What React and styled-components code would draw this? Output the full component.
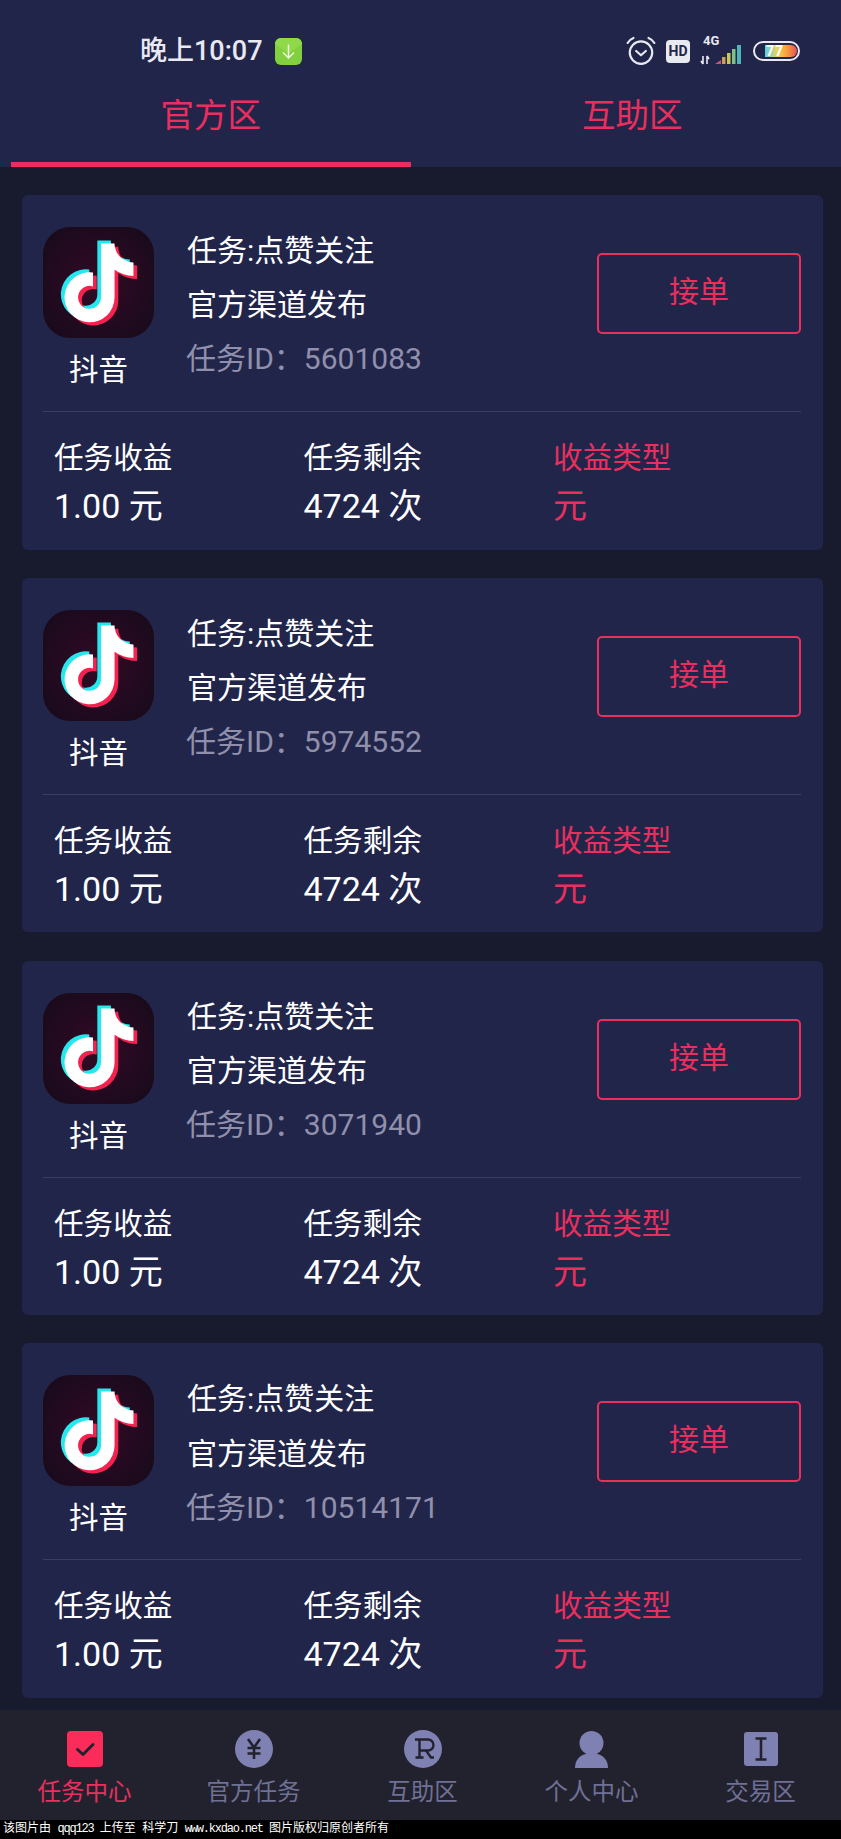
import React from "react";
import styled, { createGlobalStyle } from "styled-components";

const pink = "#e92f5e";
const Global = createGlobalStyle`
  html, body { margin: 0; padding: 0; background: #181a2e; }
  body { font-family: Roboto, "Noto Sans CJK SC", sans-serif; }
  * { box-sizing: border-box; }
`;

const Page = styled.div`
  width: 841px;
  height: 1839px;
  display: flex;
  flex-direction: column;
  overflow: hidden;
  background: #181a2e;
`;
const Header = styled.header`
  height: 167px;
  flex: none;
  background: #22254a;
  display: flex;
  flex-direction: column;
`;
const StatusBar = styled.div`
  height: 90px;
  padding: 33px 41px 0 140px;
  display: flex;
  align-items: flex-start;
  justify-content: space-between;
`;
const TimeGroup = styled.div`
  display: flex;
  align-items: center;
  gap: 12px;
  height: 36px;
`;
const Time = styled.span`
  color: #e9e9f2;
  font-size: 27px;
  font-weight: 500;
  line-height: 36px;
  white-space: nowrap;
`;
const StatusIcons = styled.div`
  display: flex;
  align-items: center;
  gap: 10px;
  height: 36px;
`;
const Tabs = styled.nav`
  flex: 1;
  display: grid;
  grid-template-columns: 1fr 1fr;
`;
const Tab = styled.div`
  position: relative;
  color: ${pink};
  font-size: 33.5px;
  line-height: 52px;
  text-align: center;
  padding-left: ${(p) => (p.$active ? "1px" : "3px")};
  &::after {
    content: "";
    display: ${(p) => (p.$active ? "block" : "none")};
    position: absolute;
    left: 11px;
    right: 10px;
    bottom: 0;
    height: 5px;
    background: ${pink};
  }
`;
const Main = styled.main`
  flex: 1;
  min-height: 0;
  padding: 28px 18px 0 22px;
  display: flex;
  flex-direction: column;
  gap: 28.3px;
`;
const Card = styled.article`
  height: 354.5px;
  flex: none;
  background: #22254a;
  border-radius: 6px;
  padding: 32px 22px 0 21px;
`;
const Top = styled.div`
  height: 185px;
  border-bottom: 1px solid #3b3e60;
  display: flex;
`;
const AppCol = styled.div`
  width: 111px;
  flex: none;
  display: flex;
  flex-direction: column;
  align-items: center;
`;
const AppIcon = styled.div`
  width: 111px;
  height: 111px;
  border-radius: 27px;
  background: radial-gradient(circle at 50% 50%, #330a25 0%, #1e0a1e 70%, #170a1a 100%);
  display: flex;
  align-items: center;
  justify-content: center;
`;
const AppName = styled.div`
  color: #fff;
  font-size: 29.5px;
  line-height: 40px;
  margin-top: 12px;
`;
const Info = styled.div`
  flex: 1;
  margin-left: 33px;
  margin-top: -3px;
  display: flex;
  flex-direction: column;
`;
const InfoLine = styled.div`
  color: ${(p) => (p.$muted ? "#9090ac" : "#fff")};
  font-size: 30px;
  margin-left: ${(p) => (p.$muted ? "-1px" : "0")};
  line-height: 54.2px;
  white-space: nowrap;
`;
const TakeButton = styled.button`
  width: 204px;
  height: 81px;
  margin-top: 26px;
  padding: 0 0 9px;
  flex: none;
  background: transparent;
  border: 2px solid ${pink};
  border-radius: 5px;
  color: ${pink};
  font: inherit;
  font-size: 30px;
`;
const Stats = styled.div`
  display: grid;
  grid-template-columns: 249.5px 249.5px 1fr;
  padding: 22px 0 0 11px;
`;
const Stat = styled.div`
  color: ${(p) => (p.$accent ? pink : "#fff")};
  font-size: ${(p) => (p.$value ? "34px" : "29.6px")};
  line-height: 48px;
  white-space: nowrap;
`;
const BottomNav = styled.nav`
  height: 110px;
  flex: none;
  background: #22222e;
  display: grid;
  grid-template-columns: repeat(5, 169px);
  padding-top: 19px;
`;
const NavItem = styled.div`
  display: flex;
  flex-direction: column;
  align-items: center;
  color: ${(p) => (p.$active ? "#e92f5e" : "#6f7096")};
  font-size: 23.5px;
`;
const NavIconBox = styled.div`
  height: 40px;
  display: flex;
  align-items: center;
  justify-content: center;
`;
const NavLabel = styled.span`
  line-height: 34px;
  margin-top: 6px;
  white-space: nowrap;
`;
const Watermark = styled.footer`
  height: 19px;
  flex: none;
  background: #000;
  color: #fff;
  font-size: 12px;
  line-height: 19px;
  padding-left: 3px;
  white-space: pre;
  word-spacing: -0.8px;
  font-family: "Liberation Mono", "Noto Sans CJK SC", monospace;
`;
const Latin = styled.span`
  letter-spacing: -1.2px;
`;

const notePath =
  "M448,209.91a210.06,210.06,0,0,1-122.77-39.25V349.38A162.55,162.55,0,1,1,185,188.31V278.2a74.62,74.62,0,1,0,52.23,71.18V0l88,0a121.18,121.18,0,0,0,1.86,22.17h0A122.18,122.18,0,0,0,381,102.39a121.43,121.43,0,0,0,67,20.14Z";

const NoteLogo = () => (
  <svg width="80" height="88" viewBox="-36 -28 520 568">
    <path d={notePath} fill="#25e8ee" transform="translate(-24 -20)" />
    <path d={notePath} fill="#f5224f" transform="translate(24 20)" />
    <path d={notePath} fill="#fff" />
  </svg>
);

const AlarmIcon = () => (
  <svg width="30" height="30" viewBox="0 0 28 28" fill="none" stroke="#e9e9f2" strokeWidth="2">
    <circle cx="14" cy="15.5" r="10.5" />
    <path d="M9.5 14l4.5 4 4.5-4" strokeLinecap="round" strokeLinejoin="round" />
    <path d="M1.5 6.5C3 4 4.5 2.8 7 1.8M26.5 6.5C25 4 23.5 2.8 21 1.8" strokeLinecap="round" />
  </svg>
);
const HdIcon = styled.span`
  width: 24px;
  height: 23px;
  border-radius: 4px;
  background: #e9e9f2;
  color: #22254a;
  font-size: 14px;
  font-weight: 700;
  display: flex;
  align-items: center;
  justify-content: center;
`;
const Network = styled.div`
  width: 43px;
  height: 30px;
  position: relative;
`;
const NetLabel = styled.span`
  position: absolute;
  left: 3px;
  top: -2px;
  color: #e9e9f2;
  font-size: 13px;
  font-weight: 700;
  line-height: 14px;
`;
const SignalSvg = () => (
  <svg width="43" height="30" viewBox="0 0 43 30">
    <path d="M3 20v8M1 25l2 3M7 28v-8M7 20l2 3" stroke="#e9e9f2" strokeWidth="1.6" fill="none" />
    <path d="M15 28l6-4v4z" fill="#c2557a" />
    <rect x="22" y="21" width="3.5" height="7" fill="#c9a05a" />
    <rect x="27" y="17" width="3.5" height="11" fill="#c9c75a" />
    <rect x="32" y="13" width="3.5" height="15" fill="#7cc08a" />
    <rect x="37" y="9" width="4" height="19" fill="#4fb3b8" />
  </svg>
);
const Battery = () => (
  <svg width="47" height="20" viewBox="0 0 47 20">
    <defs>
      <linearGradient id="bat" x1="0" x2="1" y1="0" y2="0">
        <stop offset="0" stopColor="#5ad0e8" />
        <stop offset="0.4" stopColor="#f3d35a" />
        <stop offset="0.7" stopColor="#f59a3c" />
        <stop offset="1" stopColor="#e8505a" />
      </linearGradient>
    </defs>
    <rect x="1" y="1" width="45" height="18" rx="9" fill="none" stroke="#e9e9f2" strokeWidth="2" />
    <path d="M12 4h26a6 6 0 0 1 0 12H12z" fill="url(#bat)" />
    <text x="22" y="15" fontSize="14" fontWeight="700" fill="#fff" fontFamily="Roboto" textAnchor="middle" letterSpacing="1">77</text>
  </svg>
);
const DownloadBadge = () => (
  <svg width="27" height="27" viewBox="0 0 27 27">
    <rect width="27" height="27" rx="6" fill="#82cf3f" />
    <path d="M0 6a6 6 0 0 1 6-6h15a6 6 0 0 1 6 6L13.5 15z" fill="#90d94a" />
    <path d="M13.5 6.5v13M8 14.5l5.5 5.5 5.5-5.5" stroke="#eefbe0" strokeWidth="1.5" fill="none" />
  </svg>
);

const navIcon = "#8081b3";
const navInk = "#22222e";
const TaskIcon = () => (
  <svg width="36" height="36" viewBox="0 0 36 36">
    <rect width="36" height="36" rx="4" fill="#fb2b5a" />
    <path d="M10.5 18.5l5.5 5 10-10" fill="none" stroke={navInk} strokeWidth="3" strokeLinecap="round" strokeLinejoin="round" />
  </svg>
);
const YenIcon = () => (
  <svg width="38" height="38" viewBox="0 0 38 38">
    <circle cx="19" cy="19" r="19" fill={navIcon} />
    <path d="M13 9l6 8.5L25 9M12.5 18h13M12.5 23.5h13M19 17.5V29" fill="none" stroke={navInk} strokeWidth="2.6" />
  </svg>
);
const RIcon = () => (
  <svg width="38" height="38" viewBox="0 0 38 38">
    <circle cx="19" cy="19" r="19" fill={navIcon} />
    <path d="M11 9.5h13a5.5 5.5 0 0 1 0 11H15.5M15.5 9.5v18M11.5 27.5h8M22 20.5l5 7h3" fill="none" stroke={navInk} strokeWidth="2.4" />
  </svg>
);
const PersonIcon = () => (
  <svg width="33" height="37" viewBox="0 0 33 37">
    <circle cx="16.5" cy="12" r="12" fill={navIcon} />
    <path d="M0 37c0-8 5-13 11-14h11c6 1 11 6 11 14z" fill={navIcon} />
  </svg>
);
const ExchangeIcon = () => (
  <svg width="34" height="34" viewBox="0 0 34 34">
    <rect width="34" height="34" rx="3" fill={navIcon} />
    <path d="M11.5 6.5h11M11.5 27.5h11M17 6.5v21" fill="none" stroke={navInk} strokeWidth="2.6" />
  </svg>
);

const tasks = ["5601083", "5974552", "3071940", "10514171"];
const navs = [
  { label: "任务中心", icon: <TaskIcon />, active: true },
  { label: "官方任务", icon: <YenIcon /> },
  { label: "互助区", icon: <RIcon /> },
  { label: "个人中心", icon: <PersonIcon /> },
  { label: "交易区", icon: <ExchangeIcon /> },
];

export default function App() {
  return (
    <>
      <Global />
      <Page>
        <Header>
          <StatusBar>
            <TimeGroup>
              <Time>晚上10:07</Time>
              <DownloadBadge />
            </TimeGroup>
            <StatusIcons>
              <AlarmIcon />
              <HdIcon>HD</HdIcon>
              <Network>
                <NetLabel>4G</NetLabel>
                <SignalSvg />
              </Network>
              <Battery />
            </StatusIcons>
          </StatusBar>
          <Tabs>
            <Tab $active>官方区</Tab>
            <Tab>互助区</Tab>
          </Tabs>
        </Header>
        <Main>
          {tasks.map((id) => (
            <Card key={id}>
              <Top>
                <AppCol>
                  <AppIcon>
                    <NoteLogo />
                  </AppIcon>
                  <AppName>抖音</AppName>
                </AppCol>
                <Info>
                  <InfoLine>任务:点赞关注</InfoLine>
                  <InfoLine>官方渠道发布</InfoLine>
                  <InfoLine $muted>任务ID：{id}</InfoLine>
                </Info>
                <TakeButton>接单</TakeButton>
              </Top>
              <Stats>
                <div>
                  <Stat>任务收益</Stat>
                  <Stat $value>1.00 元</Stat>
                </div>
                <div>
                  <Stat>任务剩余</Stat>
                  <Stat $value>4724 次</Stat>
                </div>
                <div>
                  <Stat $accent>收益类型</Stat>
                  <Stat $accent $value>元</Stat>
                </div>
              </Stats>
            </Card>
          ))}
        </Main>
        <BottomNav>
          {navs.map((n) => (
            <NavItem key={n.label} $active={n.active}>
              <NavIconBox>{n.icon}</NavIconBox>
              <NavLabel>{n.label}</NavLabel>
            </NavItem>
          ))}
        </BottomNav>
        <Watermark>该图片由 <Latin>qqq123</Latin> 上传至 科学刀 <Latin>www.kxdao.net</Latin> 图片版权归原创者所有</Watermark>
      </Page>
    </>
  );
}
